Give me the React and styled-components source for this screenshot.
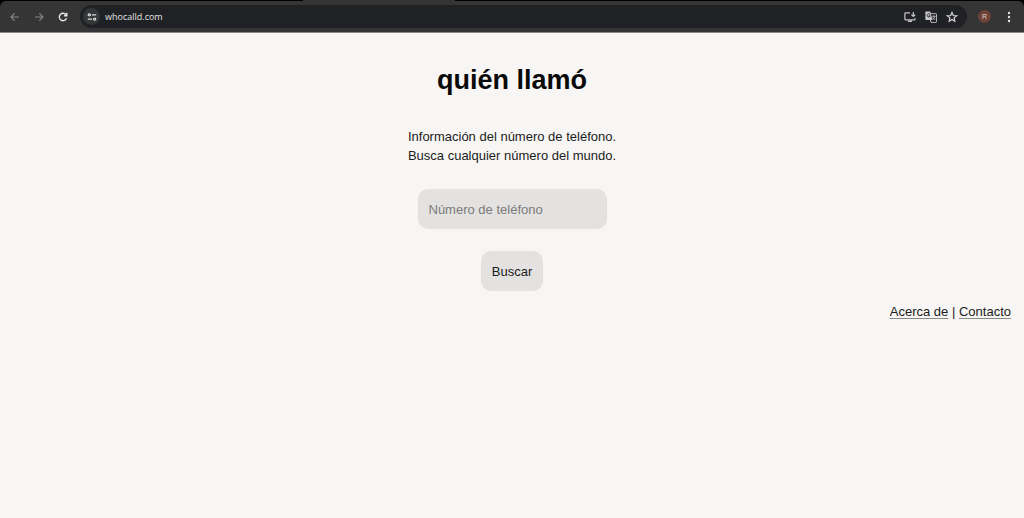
import { useState } from "react";
import styled, { createGlobalStyle } from "styled-components";

const App = () => {
  const [phone, setPhone] = useState("");

  return (
    <>
      <GlobalStyle />
      <Browser>
        <TabStrip>
          <ActiveTab />
        </TabStrip>
        <Toolbar>
          <IconButton aria-label="Atrás" $color="#86878a">
            <svg width="12" height="12" viewBox="0 0 12 12">
              <path d="M10 6H2M5.6 2.4 2 6l3.6 3.6" />
            </svg>
          </IconButton>
          <IconButton aria-label="Adelante" $color="#86878a">
            <svg width="12" height="12" viewBox="0 0 12 12">
              <path d="M2 6H10M6.4 2.4 10 6 6.4 9.6" />
            </svg>
          </IconButton>
          <IconButton aria-label="Recargar" $color="#e8e8e8" $stroke="1.4">
            <svg width="12" height="12" viewBox="0 0 12 12">
              <path d="M9.5 7.2A3.7 3.7 0 1 1 9 3.8" />
              <path d="M9.8 1.8V4.7H6.9" />
            </svg>
          </IconButton>

          <AddressBar>
            <SiteInfo aria-label="Información del sitio">
              <svg width="10" height="10" viewBox="0 0 10 10">
                <circle cx="2.3" cy="2.9" r="1.1" />
                <path d="M4.8 2.9H9.2" />
                <circle cx="7.7" cy="7.1" r="1.1" />
                <path d="M.8 7.1H5.2" />
              </svg>
            </SiteInfo>
            <Url aria-label="Dirección" defaultValue="whocalld.com" />
            <IconButton aria-label="Instalar" $color="#c7c7c7">
              <svg width="12" height="12" viewBox="0 0 12 12">
                <path d="M6 1.8H1.8Q.9 1.8.9 2.7V8Q.9 8.9 1.8 8.9H10.2Q11.1 8.9 11.1 8V7.2M4 10.3H8" />
                <path d="M9.3 1V5.2M7.4 3.6 9.3 5.5 11.2 3.6" />
              </svg>
            </IconButton>
            <IconButton aria-label="Traducir" $color="#c7c7c7">
              <svg width="12" height="12" viewBox="0 0 12 12">
                <path d="M1 .5H5.3L7.6 8.9H1Q.4 8.9.4 8.3V1.1Q.4.5 1 .5Z" fill="currentColor" stroke="none" />
                <path d="M5 3.4A1.6 1.6 0 1 0 5.3 4.8H3.8" stroke="#202124" strokeWidth=".9" />
                <path d="M6.2 2.6H10.9Q11.5 2.6 11.5 3.2V10.8Q11.5 11.4 10.9 11.4H6L5.4 9" strokeWidth=".9" />
                <path d="M7.2 5.3H10.6M8.9 4.4V5.3M10 5.3Q9.6 7.3 7.6 8.6M7.8 6.3 10.3 9" strokeWidth=".8" />
              </svg>
            </IconButton>
            <IconButton aria-label="Añadir a marcadores" $color="#d6d6d6">
              <svg width="12" height="12" viewBox="0 0 12 12">
                <path d="M6 1.4 7.3 4.5 10.6 4.8 8.1 6.9 8.8 10.2 6 8.5 3.2 10.2 3.9 6.9 1.4 4.8 4.7 4.5Z" />
              </svg>
            </IconButton>
          </AddressBar>

          <Profile aria-label="Perfil">R</Profile>
          <IconButton aria-label="Menú" $color="#e3e3e3">
            <svg width="12" height="12" viewBox="0 0 12 12">
              <g fill="currentColor" stroke="none">
                <circle cx="6" cy="2" r="1.2" />
                <circle cx="6" cy="6" r="1.2" />
                <circle cx="6" cy="10" r="1.2" />
              </g>
            </svg>
          </IconButton>
        </Toolbar>
      </Browser>

      <Main>
        <Title>quién llamó</Title>
        <Intro>
          Información del número de teléfono.
          <br />
          Busca cualquier número del mundo.
        </Intro>
        <SearchForm onSubmit={(e) => e.preventDefault()}>
          <PhoneInput
            type="tel"
            aria-label="Número de teléfono"
            placeholder="Número de teléfono"
            value={phone}
            onChange={(e) => setPhone(e.target.value)}
          />
          <SearchButton type="submit">Buscar</SearchButton>
        </SearchForm>
      </Main>

      <Footer>
        <a href="#acerca">Acerca de</a> | <a href="#contacto">Contacto</a>
      </Footer>
    </>
  );
};

export default App;

const GlobalStyle = createGlobalStyle`
  * {
    box-sizing: border-box;
  }
  body {
    margin: 0;
    background: #f7f6f4;
    color: #1c1c1c;
    font-family: "Liberation Sans", Arial, sans-serif;
    font-size: 13px;
    line-height: 19px;
  }
  button, input {
    border: none;
    padding: 0;
    font: inherit;
    color: inherit;
  }
  button {
    cursor: pointer;
  }
`

const Browser = styled.header`
  background: #000;
  border-bottom: 1px solid #8a8a8a;
`

const TabStrip = styled.div`
  display: flex;
  justify-content: center;
  height: 1px;
  padding-right: 26%;
`

const ActiveTab = styled.div`
  width: 20%;
  background: #353535;
`

const Toolbar = styled.div`
  display: flex;
  align-items: center;
  height: 31px;
  padding: 0 3px;
  background: #353535;
  border-radius: 6px 6px 0 0;
`

const IconButton = styled.button`
  display: flex;
  align-items: center;
  justify-content: center;
  flex: none;
  width: 24px;
  height: 24px;
  background: none;
  color: ${(props) => props.$color};

  svg {
    fill: none;
    stroke: currentColor;
    stroke-width: ${(props) => props.$stroke || "1.2"};
  }
`

const AddressBar = styled.div`
  display: flex;
  align-items: center;
  flex: 1;
  height: 23px;
  margin: 0 5px;
  padding: 0 5px 0 3px;
  border-radius: 12px;
  background: #202124;

  ${IconButton} {
    width: 21px;
  }
`

const SiteInfo = styled.button`
  display: flex;
  align-items: center;
  justify-content: center;
  flex: none;
  width: 17px;
  height: 17px;
  border-radius: 50%;
  background: #353638;
  color: #e3e3e3;

  svg {
    fill: none;
    stroke: currentColor;
    stroke-width: 1.2;
  }
`

const Url = styled.input`
  flex: 1;
  min-width: 0;
  margin-left: 5px;
  background: none;
  color: #e3e3e3;
  font-family: "Open Sans", sans-serif;
  font-size: 9px;
  line-height: 16px;
  outline: none;
`

const Profile = styled.button`
  flex: none;
  width: 13px;
  height: 13px;
  margin: 0 6px;
  border-radius: 50%;
  background: #6d4238;
  color: #e3d5d1;
  font-size: 7px;
  line-height: 13px;
`

const Main = styled.main`
  display: flex;
  flex-direction: column;
  align-items: center;
  padding: 31px 13px 0;
  text-align: center;
`

const Title = styled.h1`
  margin: 0;
  color: #0a0a0a;
  font-size: 27px;
  line-height: 32px;
`

const Intro = styled.p`
  margin: 31px 0 24px;
`

const SearchForm = styled.form`
  display: flex;
  flex-direction: column;
  align-items: center;
  gap: 22px;
`

const PhoneInput = styled.input`
  width: 189px;
  height: 40px;
  padding: 0 11px;
  border-radius: 10px;
  background: #e3e2e0;

  &::placeholder {
    color: #7b7b7b;
  }
`

const SearchButton = styled.button`
  height: 40px;
  padding: 0 11px;
  border-radius: 10px;
  background: #e3e2e0;
`

const Footer = styled.footer`
  padding: 11px 13px;
  text-align: right;

  a {
    color: inherit;
    text-decoration: underline 1px #8a8a8a;
    text-underline-offset: 2px;
  }
`
